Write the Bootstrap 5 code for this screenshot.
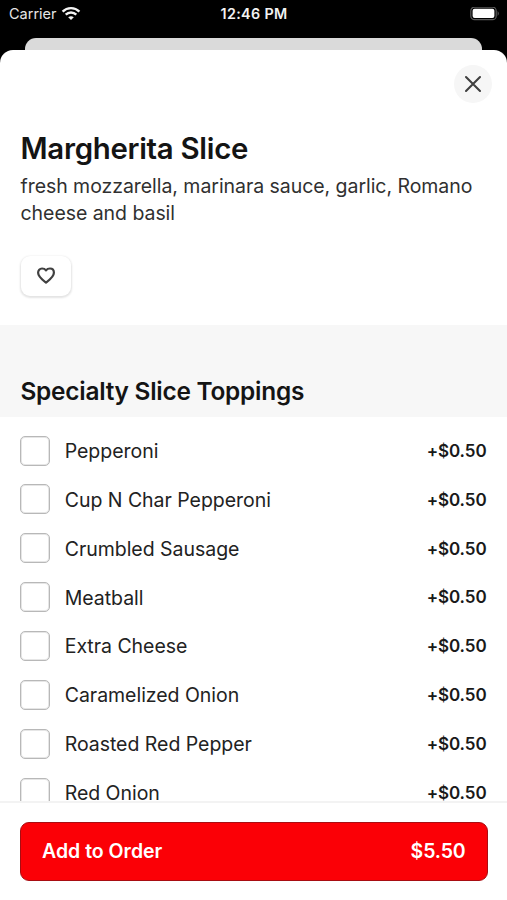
<!DOCTYPE html>
<html lang="en">
<head>
<meta charset="utf-8">
<meta name="viewport" content="width=device-width, initial-scale=1">
<title>Margherita Slice</title>
<link href="https://cdn.jsdelivr.net/npm/bootstrap@5.3.0/dist/css/bootstrap.min.css" rel="stylesheet">
<style>
body { font-family: Inter, "Liberation Sans", sans-serif; color: #222; letter-spacing: 0; }
.screen { height: 900px; background: #000; }
.status { height: 38px; flex: none; padding: 0 7px 10px 9px; font-size: 14.5px; color: #e6e6e6; }
.status .clock { font-weight: 600; font-size: 14.3px; letter-spacing: .35px; color: #f2f2f2; margin-right: 1px; }
.sheet-behind { height: 12px; flex: none; margin: 0 25px; background: #dadada; border-radius: 11px 11px 0 0; }
.sheet { background: #fff; border-radius: 13px 13px 0 0; min-height: 0; }
.close-row { height: 80px; padding: 15px 15px 0; }
.close-btn { width: 38px; height: 38px; background: #f6f6f6; }
.intro { height: 195px; padding: 0 20.5px; }
.item-title { font-size: 29.4px; font-weight: 600; line-height: 38px; letter-spacing: -.29px; color: #141414; }
.item-text { font-size: 19.5px; line-height: 27px; letter-spacing: -.05px; color: #303030; margin-top: 5px; }
.fav-btn { width: 50px; height: 40px; margin-top: 29px; border-radius: 9px; box-shadow: 0 1px 2px 1px rgba(0,0,0,.11); background: #fff; }
.group-head { height: 92px; padding: 0 20.5px 7px; background: #f7f7f7; }
.group-title { font-size: 24.4px; font-weight: 600; line-height: 38px; letter-spacing: -.24px; color: #141414; }
.toppings { padding: 9.2px 20.5px 0 20px; min-height: 0; }
.topping { height: 48.85px; flex: none; }
.topping .form-check-input { width: 30px; height: 30px; border: 1px solid #b8b8b8; box-shadow: inset 0 0 0 1px #e6e6e6; border-radius: 5px; flex: none; }
.topping-name { font-size: 19.5px; letter-spacing: -.03px; margin-left: 14.7px; padding-top: 2px; }
.topping-price { font-size: 17px; font-weight: 600; letter-spacing: -.1px; color: #191919; padding-top: 2px; }
.order-bar { height: 99px; flex: none; padding: 19px 19.5px 0 20px; border-top: 2px solid #f3f3f3; }
.order-btn { height: 59px; padding: 1px 21px 0; background: #fb0006; border: 1px solid #a80d12; border-radius: 9px; color: #fff; font-size: 19.5px; font-weight: 600; }
.order-price { letter-spacing: -.15px; }
</style>
</head>
<body>
<div class="screen d-flex flex-column overflow-hidden">
  <header class="status row g-0 align-items-center">
    <div class="col d-flex align-items-center">
      <span>Carrier</span>
      <svg class="ms-1" width="20" height="16" viewBox="0 0 20 16" fill="none" stroke="#f4f4f4" stroke-width="2.4">
        <path d="M1.6 5.6C6.3 1 13.7 1 18.4 5.6"/>
        <path d="M4.7 8.7C7.7 5.8 12.3 5.8 15.3 8.7"/>
        <path d="M10 14.1L7.2 11.3Q10 9.1 12.8 11.3Z" fill="#f4f4f4" stroke="none"/>
      </svg>
    </div>
    <div class="col-auto clock">12:46 PM</div>
    <div class="col d-flex justify-content-end">
      <svg width="30" height="15" viewBox="0 0 30 15">
        <rect x=".8" y=".1" width="25.4" height="12.6" rx="3.8" fill="#000" stroke="#5a5a5a" stroke-width="1.2"/>
        <rect x="2.6" y="1.7" width="21.8" height="9.4" rx="2" fill="#fff"/>
        <path d="M27.6 4Q30 6.4 27.6 8.9Z" fill="#5a5a5a"/>
      </svg>
    </div>
  </header>
  <div class="sheet-behind"></div>
  <main class="sheet d-flex flex-column flex-grow-1 overflow-hidden">
    <div class="close-row d-flex justify-content-end flex-shrink-0">
      <button type="button" class="close-btn btn rounded-circle border-0 p-0 d-flex align-items-center justify-content-center" aria-label="Close">
        <svg width="18" height="18" viewBox="0 0 18 18" stroke="#404040" stroke-width="2.1" stroke-linecap="round"><path d="M2 2L16 16M16 2L2 16"/></svg>
      </button>
    </div>
    <section class="intro flex-shrink-0">
      <h1 class="item-title mb-0">Margherita Slice</h1>
      <p class="item-text mb-0">fresh mozzarella, marinara sauce, garlic, Romano cheese and basil</p>
      <button type="button" class="fav-btn btn border-0 p-0 d-flex align-items-center justify-content-center" aria-label="Favorite">
        <svg width="20" height="18" viewBox="0 0 20 18" fill="none" stroke="#404040" stroke-width="2.2" stroke-linejoin="round"><path d="M10 15.6C7 13.3 2.1 9.9 2.1 5.8C2.1 3.2 3.8 1.5 6 1.5C7.8 1.5 9.2 2.3 10 3.4C10.8 2.3 12.2 1.5 14 1.5C16.2 1.5 17.9 3.2 17.9 5.8C17.9 9.9 13 13.3 10 15.6Z"/></svg>
      </button>
    </section>
    <div class="group-head d-flex align-items-end flex-shrink-0">
      <h2 class="group-title mb-0">Specialty Slice Toppings</h2>
    </div>
    <div class="toppings d-flex flex-column flex-grow-1 overflow-hidden">
      <label class="topping d-flex align-items-center"><input class="form-check-input m-0" type="checkbox"><span class="topping-name">Pepperoni</span><span class="topping-price ms-auto">+$0.50</span></label>
      <label class="topping d-flex align-items-center"><input class="form-check-input m-0" type="checkbox"><span class="topping-name">Cup N Char Pepperoni</span><span class="topping-price ms-auto">+$0.50</span></label>
      <label class="topping d-flex align-items-center"><input class="form-check-input m-0" type="checkbox"><span class="topping-name">Crumbled Sausage</span><span class="topping-price ms-auto">+$0.50</span></label>
      <label class="topping d-flex align-items-center"><input class="form-check-input m-0" type="checkbox"><span class="topping-name">Meatball</span><span class="topping-price ms-auto">+$0.50</span></label>
      <label class="topping d-flex align-items-center"><input class="form-check-input m-0" type="checkbox"><span class="topping-name">Extra Cheese</span><span class="topping-price ms-auto">+$0.50</span></label>
      <label class="topping d-flex align-items-center"><input class="form-check-input m-0" type="checkbox"><span class="topping-name">Caramelized Onion</span><span class="topping-price ms-auto">+$0.50</span></label>
      <label class="topping d-flex align-items-center"><input class="form-check-input m-0" type="checkbox"><span class="topping-name">Roasted Red Pepper</span><span class="topping-price ms-auto">+$0.50</span></label>
      <label class="topping d-flex align-items-center"><input class="form-check-input m-0" type="checkbox"><span class="topping-name">Red Onion</span><span class="topping-price ms-auto">+$0.50</span></label>
    </div>
    <footer class="order-bar bg-white">
      <button type="button" class="order-btn btn w-100 d-flex align-items-center justify-content-between"><span>Add to Order</span><span class="order-price">$5.50</span></button>
    </footer>
  </main>
</div>
<script src="https://cdn.jsdelivr.net/npm/bootstrap@5.3.0/dist/js/bootstrap.bundle.min.js"></script>
</body>
</html>
